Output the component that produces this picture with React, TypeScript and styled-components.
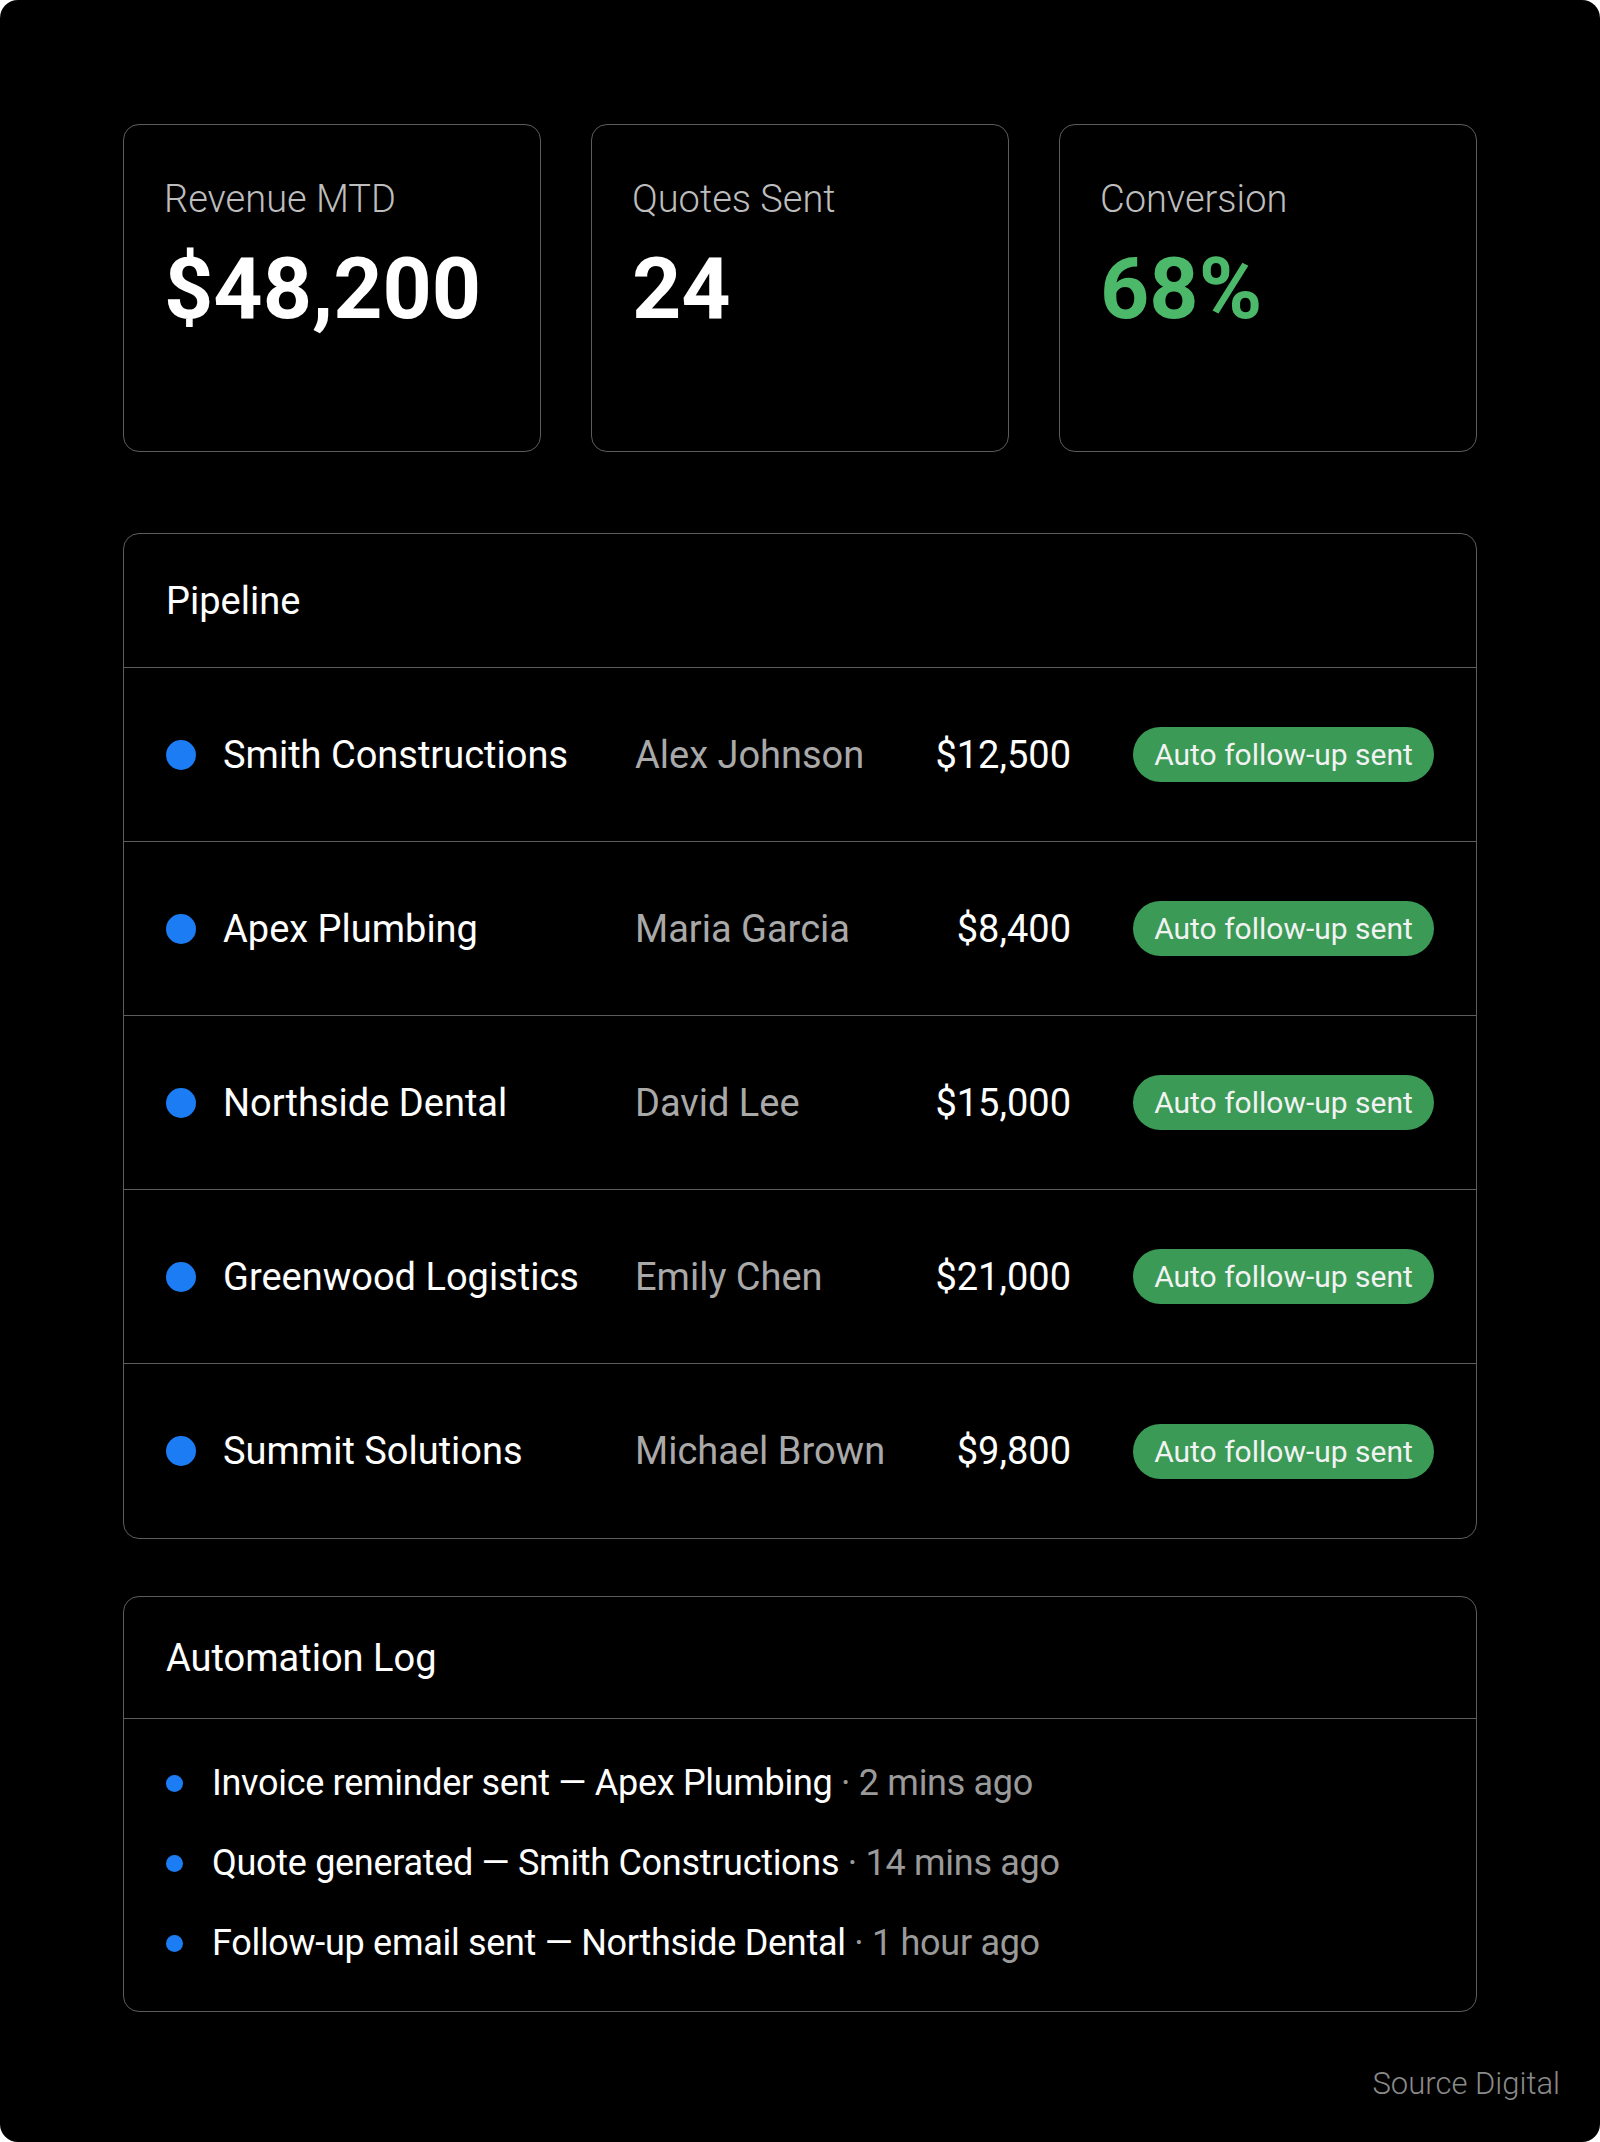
import styled, { createGlobalStyle } from 'styled-components';

const GlobalStyle = createGlobalStyle`
  * {
    box-sizing: border-box;
  }
  html,
  body {
    margin: 0;
    padding: 0;
    background: #ffffff;
  }
  body {
    font-family: Roboto, 'Liberation Sans', sans-serif;
    -webkit-font-smoothing: antialiased;
  }
`;

const stats = [
  { label: 'Revenue MTD', value: '$48,200', accent: false },
  { label: 'Quotes Sent', value: '24', accent: false },
  { label: 'Conversion', value: '68%', accent: true },
];

const pipeline = [
  { company: 'Smith Constructions', contact: 'Alex Johnson', amount: '$12,500' },
  { company: 'Apex Plumbing', contact: 'Maria Garcia', amount: '$8,400' },
  { company: 'Northside Dental', contact: 'David Lee', amount: '$15,000' },
  { company: 'Greenwood Logistics', contact: 'Emily Chen', amount: '$21,000' },
  { company: 'Summit Solutions', contact: 'Michael Brown', amount: '$9,800' },
];

const logEntries = [
  { action: 'Invoice reminder sent', client: 'Apex Plumbing', time: '2 mins ago' },
  { action: 'Quote generated', client: 'Smith Constructions', time: '14 mins ago' },
  { action: 'Follow-up email sent', client: 'Northside Dental', time: '1 hour ago' },
];

const App = () => {
  return (
    <>
      <GlobalStyle />
      <Page>
        <Main>
          <StatsRow>
            {stats.map((stat) => (
              <StatCard key={stat.label}>
                <StatLabel>{stat.label}</StatLabel>
                <StatValue accent={stat.accent}>{stat.value}</StatValue>
              </StatCard>
            ))}
          </StatsRow>

          <Panel>
            <PanelHeader tall>Pipeline</PanelHeader>
            {pipeline.map((deal) => (
              <DealRow key={deal.company}>
                <Dot />
                <Company>{deal.company}</Company>
                <Contact>{deal.contact}</Contact>
                <Amount>{deal.amount}</Amount>
                <Badge>Auto follow-up sent</Badge>
              </DealRow>
            ))}
          </Panel>

          <LogPanel>
            <PanelHeader>Automation Log</PanelHeader>
            <LogList>
              {logEntries.map((entry) => (
                <LogItem key={entry.action}>
                  <SmallDot />
                  <span>
                    {entry.action} — {entry.client}
                    <Time> · {entry.time}</Time>
                  </span>
                </LogItem>
              ))}
            </LogList>
          </LogPanel>
        </Main>
        <Footer>Source Digital</Footer>
      </Page>
    </>
  );
};

export default App;

const Page = styled.div`
  width: 1600px;
  height: 2142px;
  background: #000000;
  border-radius: 18px;
  padding-top: 124px;
  overflow: hidden;
`;

const Main = styled.div`
  width: 1354px;
  margin: 0 auto;
  display: flex;
  flex-direction: column;
`;

const StatsRow = styled.div`
  display: grid;
  grid-template-columns: repeat(3, minmax(0, 1fr));
  gap: 50px;
`;

const StatCard = styled.div`
  height: 328px;
  border: 1.5px solid #5c5c5c;
  border-radius: 16px;
  padding: 52px 40px 0;
`;

const StatLabel = styled.div`
  color: #bdbdbd;
  font-size: 38px;
  font-weight: 300;
  line-height: 44px;
  white-space: nowrap;
`;

const StatValue = styled.div<{ accent: boolean }>`
  margin-top: 22px;
  color: ${({ accent }) => (accent ? '#4cb96a' : '#ffffff')};
  font-size: 86px;
  font-weight: 700;
  line-height: 92px;
  white-space: nowrap;
`;

const Panel = styled.div`
  margin-top: 81px;
  border: 1.5px solid #5c5c5c;
  border-radius: 16px;
  overflow: hidden;
`;

const LogPanel = styled(Panel)`
  margin-top: 57px;
`;

const PanelHeader = styled.div<{ tall?: boolean }>`
  height: ${({ tall }) => (tall ? '134px' : '122px')};
  display: flex;
  align-items: center;
  padding: 0 42px;
  border-bottom: 1.5px solid #5c5c5c;
  color: #ffffff;
  font-size: 38px;
  font-weight: 400;
`;

const DealRow = styled.div`
  height: 174px;
  display: flex;
  align-items: center;
  padding: 0 42px;
  border-bottom: 1.5px solid #5c5c5c;
  white-space: nowrap;

  &:first-of-type {
    height: 178px;
  }

  &:last-child {
    border-bottom: none;
  }
`;

const Dot = styled.span`
  width: 30px;
  height: 30px;
  border-radius: 50%;
  background: #1b7cf3;
  flex-shrink: 0;
  margin-right: 27px;
`;

const Company = styled.span`
  width: 412px;
  flex-shrink: 0;
  color: #ffffff;
  font-size: 38px;
  font-weight: 400;
`;

const Contact = styled.span`
  flex: 1;
  min-width: 0;
  color: #a9a9a9;
  font-size: 38px;
  font-weight: 400;
`;

const Amount = styled.span`
  width: 200px;
  flex-shrink: 0;
  text-align: right;
  color: #ffffff;
  font-size: 38px;
  font-weight: 400;
`;

const Badge = styled.span`
  width: 301px;
  height: 55px;
  margin-left: 62px;
  border-radius: 28px;
  background: #3a9a56;
  color: #f2f2f2;
  font-size: 30px;
  display: flex;
  align-items: center;
  justify-content: center;
  flex-shrink: 0;
`;

const LogList = styled.div`
  padding: 24px 42px 28px;
  display: flex;
  flex-direction: column;
`;

const LogItem = styled.div`
  height: 80px;
  display: flex;
  align-items: center;
  color: #ffffff;
  font-size: 36px;
  font-weight: 400;
  letter-spacing: -0.3px;
  white-space: nowrap;
`;

const SmallDot = styled.span`
  width: 17px;
  height: 17px;
  border-radius: 50%;
  background: #1b7cf3;
  flex-shrink: 0;
  margin-right: 29px;
`;

const Time = styled.span`
  color: #9a9a9a;
`;

const Footer = styled.div`
  margin-top: 54px;
  padding-right: 40px;
  text-align: right;
  color: #8a8a8a;
  font-size: 31px;
  font-weight: 300;
  line-height: 36px;
`;
